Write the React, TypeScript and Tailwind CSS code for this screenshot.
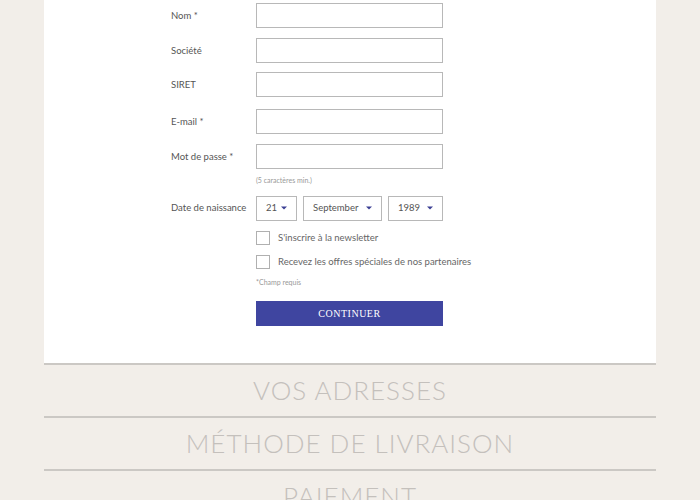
import React from "react";

const FONT = "font-['Lato','Open_Sans',sans-serif]";

const Arrow = () => (
  <svg width="6" height="4" viewBox="0 0 6 4" className="shrink-0">
    <path d="M0 0.5h6L3 3.5z" fill="#3b3f93" />
  </svg>
);

const Field = ({ label, className = "" }: { label: string; className?: string }) => (
  <div className={`flex items-center ${className}`}>
    <label className="w-[85px] text-[9.5px] text-[#555] pt-[1px]">{label}</label>
    <input className="w-[187px] h-[25px] border border-[#b8b8b8] bg-white outline-none" />
  </div>
);

const Select = ({ value, width }: { value: string; width: string }) => (
  <div className={`${width} h-[25px] border border-[#b8b8b8] bg-white flex items-center justify-between pl-[9px] pr-[9px] text-[9.5px] text-[#555]`}>
    <span>{value}</span>
    <Arrow />
  </div>
);

const Check = ({ label, className = "" }: { label: string; className?: string }) => (
  <div className={`flex items-center gap-[8px] ${className}`}>
    <div className="w-[14px] h-[14px] border border-[#b0b0b0] bg-white" />
    <span className="text-[9.5px] text-[#666]">{label}</span>
  </div>
);

export default function App() {
  return (
    <div className={`w-[700px] h-[500px] overflow-hidden bg-[#f2eee9] ${FONT}`}>
      <div className="mx-[44px] bg-white pt-[3px] pb-[37px] pl-[127px]">
        <Field label="Nom *" />
        <Field label="Société" className="mt-[10px]" />
        <Field label="SIRET" className="mt-[9px]" />
        <Field label="E-mail *" className="mt-[12px]" />
        <Field label="Mot de passe *" className="mt-[10px]" />
        <div className="pl-[85px] mt-[6px] text-[7px] text-[#999]">(5 caractères min.)</div>
        <div className="flex items-center mt-[10px]">
          <label className="w-[85px] text-[9.5px] text-[#555]">Date de naissance</label>
          <div className="flex gap-[6px]">
            <Select value="21" width="w-[41px]" />
            <Select value="September" width="w-[79px]" />
            <Select value="1989" width="w-[55px]" />
          </div>
        </div>
        <div className="pl-[85px]">
          <Check label="S'inscrire à la newsletter" className="mt-[10px]" />
          <Check label="Recevez les offres spéciales de nos partenaires" className="mt-[10px]" />
          <div className="mt-[8px] text-[7px] text-[#999]">*Champ requis</div>
          <button className="mt-[13px] w-[187px] h-[25px] bg-[#3f45a0] text-white text-[10px] tracking-[0.5px] font-['Liberation_Serif',serif] uppercase">
            Continuer
          </button>
        </div>
      </div>
      <div className="mx-[44px]">
        {["Vos adresses", "Méthode de livraison", "Paiement"].map((t) => (
          <div
            key={t}
            className="border-t-[2px] border-[#cbc8c4] h-[53px] flex items-center justify-center text-[26px] font-light text-[#c4c0bc] uppercase tracking-[1px]"
          >
            {t}
          </div>
        ))}
      </div>
    </div>
  );
}
